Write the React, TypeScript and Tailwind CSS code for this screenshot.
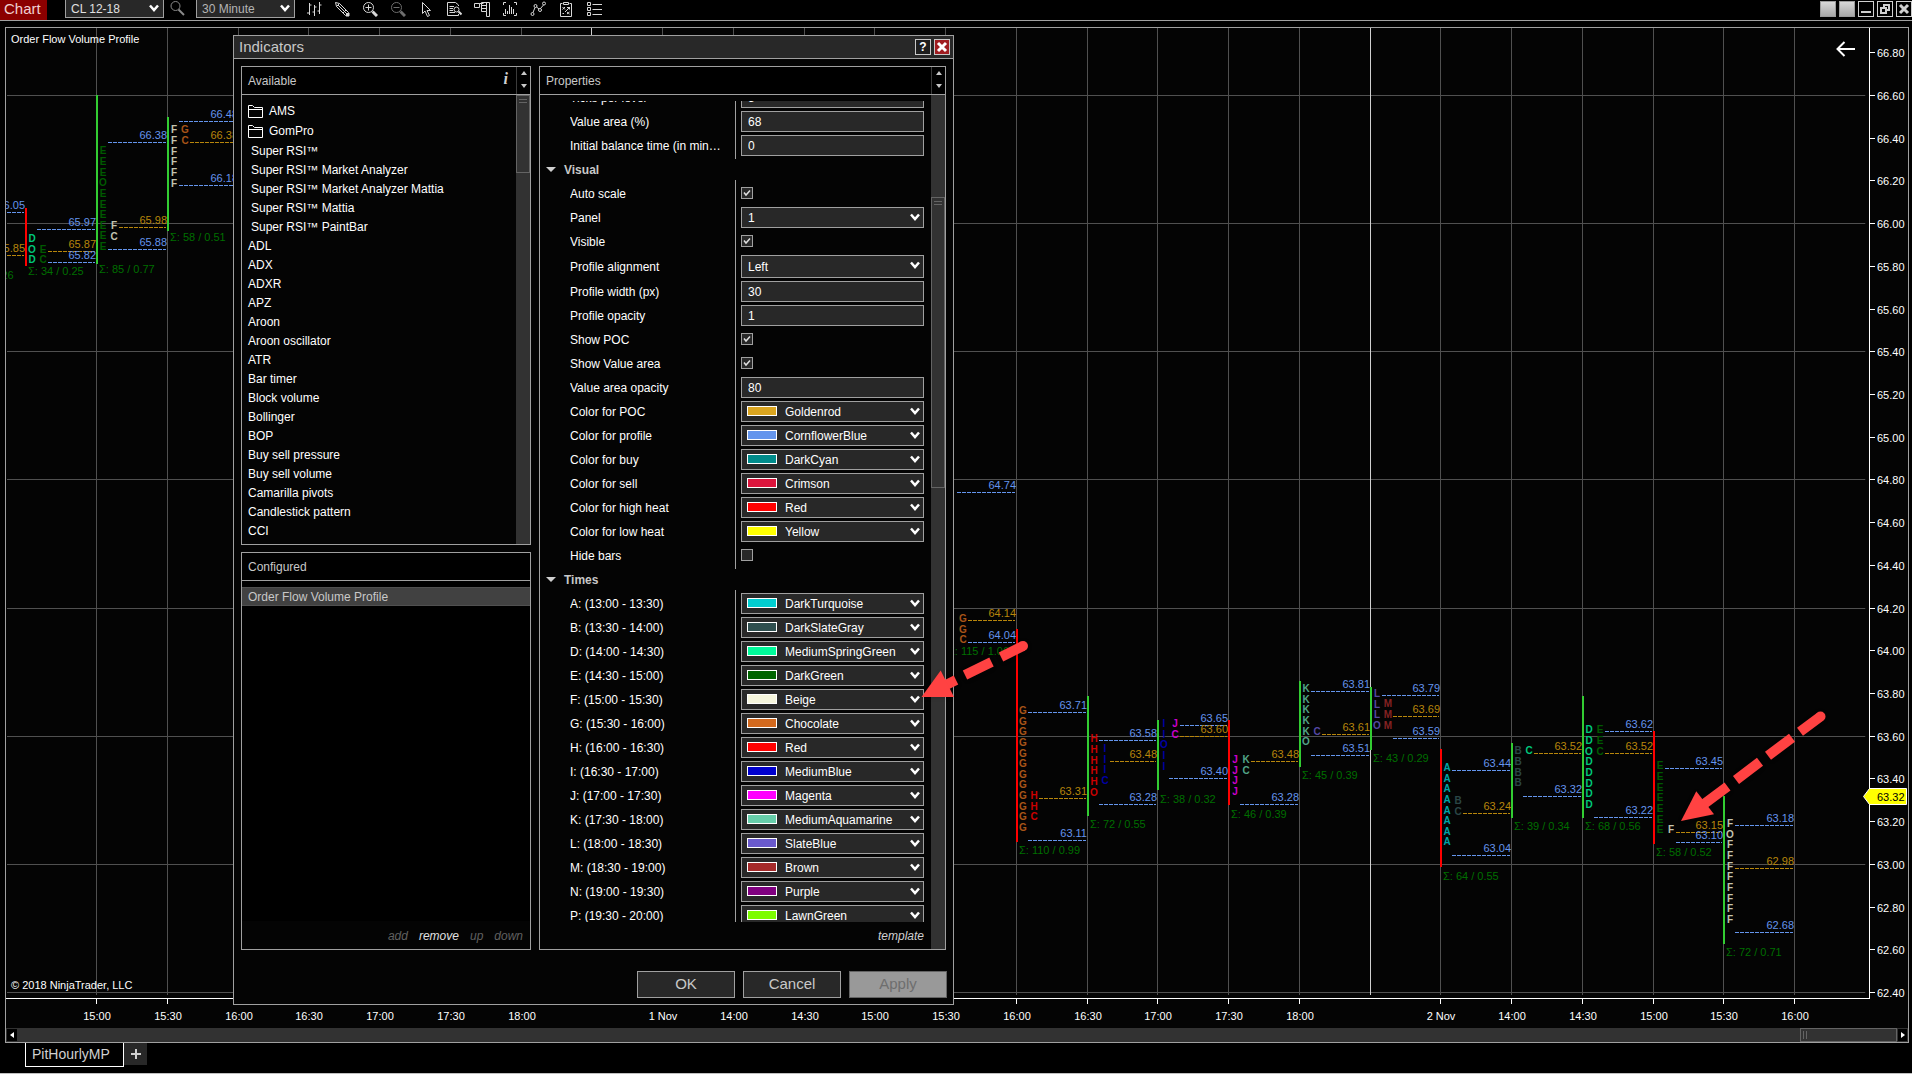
import React from 'react';

type Profile = {
  slot: number;
  bar?: { up: boolean; high: number; low: number };
  columns: { at: number; letters: string; color: string }[];
  levels: { price: number; color: string; inset: number }[];
  total?: { at: number; text: string };
};

const BLUE = '#6495ed';
const GOLD = '#b8860b';
const TURQUOISE = '#00a5a7';
const SLATE = '#2a4646';
const SPRING = '#00c87b';
const GREEN = '#005a00';
const BEIGE = '#c4c4b0';
const CHOCOLATE = '#a85418';
const RED = '#cc0000';
const INDIGO = '#0000a4';
const MAGENTA = '#cc00cc';
const AQUA = '#52a488';
const VIOLET = '#5548a4';
const BROWN = '#842222';

const profiles: Profile[] = [
  {
    slot: -2,
    columns: [],
    levels: [
      { price: 66.05, color: BLUE, inset: 11 },
      { price: 65.85, color: GOLD, inset: 11 },
    ],
    total: { at: 65.76, text: '38 / 0.26' },
  },
  {
    slot: -1,
    bar: { up: false, high: 66.07, low: 65.8 },
    columns: [
      { at: 65.935, letters: 'DOD', color: SPRING },
      { at: 65.885, letters: 'EC', color: GREEN },
    ],
    levels: [
      { price: 65.97, color: BLUE, inset: 11 },
      { price: 65.87, color: GOLD, inset: 22 },
      { price: 65.82, color: BLUE, inset: 22 },
    ],
    total: { at: 65.78, text: '34 / 0.25' },
  },
  {
    slot: 0,
    bar: { up: true, high: 66.6, low: 65.81 },
    columns: [
      { at: 66.345, letters: 'EEEOEEEEEE', color: GREEN },
      { at: 65.995, letters: 'FC', color: BEIGE },
    ],
    levels: [
      { price: 66.38, color: BLUE, inset: 11 },
      { price: 65.98, color: GOLD, inset: 22 },
      { price: 65.88, color: BLUE, inset: 11 },
    ],
    total: { at: 65.79, text: '85 / 0.77' },
  },
  {
    slot: 1,
    bar: { up: true, high: 66.495, low: 65.965 },
    columns: [
      { at: 66.443, letters: 'FFFFFF', color: BEIGE },
      { at: 66.443, letters: 'GC', color: CHOCOLATE },
    ],
    levels: [
      { price: 66.48, color: BLUE, inset: 11 },
      { price: 66.38, color: GOLD, inset: 22 },
      { price: 66.18, color: BLUE, inset: 11 },
    ],
    total: { at: 65.94, text: '58 / 0.51' },
  },
  {
    slot: 12,
    columns: [
      { at: 64.155, letters: '', color: CHOCOLATE },
      { at: 64.155, letters: 'GGC', color: CHOCOLATE },
    ],
    levels: [
      { price: 64.74, color: BLUE, inset: 11 },
      { price: 64.14, color: GOLD, inset: 22 },
      { price: 64.04, color: BLUE, inset: 22 },
    ],
    total: { at: 64.0, text: '115 / 1.06' },
  },
  {
    slot: 13,
    bar: { up: false, high: 64.1, low: 63.1 },
    columns: [
      { at: 63.725, letters: 'GGGGGGGGGGGG', color: CHOCOLATE },
      { at: 63.327, letters: 'HHC', color: RED },
    ],
    levels: [
      { price: 63.71, color: BLUE, inset: 11 },
      { price: 63.31, color: GOLD, inset: 22 },
      { price: 63.11, color: BLUE, inset: 11 },
    ],
    total: { at: 63.07, text: '110 / 0.99' },
  },
  {
    slot: 14,
    bar: { up: true, high: 63.784, low: 63.222 },
    columns: [
      { at: 63.592, letters: 'HHHHHO', color: RED },
      { at: 63.547, letters: 'IIIC', color: INDIGO },
    ],
    levels: [
      { price: 63.58, color: BLUE, inset: 11 },
      { price: 63.48, color: GOLD, inset: 22 },
      { price: 63.28, color: BLUE, inset: 11 },
    ],
    total: { at: 63.19, text: '72 / 0.55' },
  },
  {
    slot: 15,
    bar: { up: true, high: 63.672, low: 63.344 },
    columns: [
      { at: 63.664, letters: 'IIOII', color: INDIGO },
      { at: 63.664, letters: 'JC', color: MAGENTA },
    ],
    levels: [
      { price: 63.65, color: BLUE, inset: 22 },
      { price: 63.6, color: GOLD, inset: 22 },
      { price: 63.4, color: BLUE, inset: 11 },
    ],
    total: { at: 63.31, text: '38 / 0.32' },
  },
  {
    slot: 16,
    bar: { up: false, high: 63.672, low: 63.275 },
    columns: [
      { at: 63.495, letters: 'JJJJ', color: MAGENTA },
      { at: 63.495, letters: 'KC', color: AQUA },
    ],
    levels: [
      { price: 63.48, color: GOLD, inset: 22 },
      { price: 63.28, color: BLUE, inset: 11 },
    ],
    total: { at: 63.24, text: '46 / 0.39' },
  },
  {
    slot: 17,
    bar: { up: true, high: 63.854, low: 63.453 },
    columns: [
      { at: 63.828, letters: 'KKKKKO', color: AQUA },
      { at: 63.626, letters: 'C', color: VIOLET },
    ],
    levels: [
      { price: 63.81, color: BLUE, inset: 11 },
      { price: 63.61, color: GOLD, inset: 22 },
      { price: 63.51, color: BLUE, inset: 11 },
    ],
    total: { at: 63.42, text: '45 / 0.39' },
  },
  {
    slot: 18,
    bar: { up: true, high: 63.83, low: 63.532 },
    columns: [
      { at: 63.804, letters: 'LLLO', color: VIOLET },
      { at: 63.756, letters: 'MMM', color: BROWN },
    ],
    levels: [
      { price: 63.79, color: BLUE, inset: 11 },
      { price: 63.69, color: GOLD, inset: 22 },
      { price: 63.59, color: BLUE, inset: 22 },
    ],
    total: { at: 63.5, text: '43 / 0.29' },
  },
  {
    slot: 19,
    bar: { up: false, high: 63.54, low: 62.983 },
    columns: [
      { at: 63.458, letters: 'AAAAAAAA', color: TURQUOISE },
      { at: 63.303, letters: 'BC', color: SLATE },
    ],
    levels: [
      { price: 63.44, color: BLUE, inset: 11 },
      { price: 63.24, color: GOLD, inset: 22 },
      { price: 63.04, color: BLUE, inset: 11 },
    ],
    total: { at: 62.95, text: '64 / 0.55' },
  },
  {
    slot: 20,
    bar: { up: true, high: 63.564, low: 63.214 },
    columns: [
      { at: 63.536, letters: 'BBBB', color: SLATE },
      { at: 63.536, letters: 'C', color: SPRING },
    ],
    levels: [
      { price: 63.52, color: GOLD, inset: 22 },
      { price: 63.32, color: BLUE, inset: 11 },
    ],
    total: { at: 63.18, text: '39 / 0.34' },
  },
  {
    slot: 21,
    bar: { up: true, high: 63.784, low: 63.213 },
    columns: [
      { at: 63.634, letters: 'DDODDDDD', color: SPRING },
      { at: 63.634, letters: 'EEC', color: GREEN },
    ],
    levels: [
      { price: 63.62, color: BLUE, inset: 22 },
      { price: 63.52, color: GOLD, inset: 22 },
      { price: 63.22, color: BLUE, inset: 11 },
    ],
    total: { at: 63.18, text: '68 / 0.56' },
  },
  {
    slot: 22,
    bar: { up: false, high: 63.62, low: 63.093 },
    columns: [
      { at: 63.466, letters: 'EEEEEEE', color: GREEN },
      { at: 63.167, letters: 'F', color: BEIGE },
    ],
    levels: [
      { price: 63.45, color: BLUE, inset: 11 },
      { price: 63.15, color: GOLD, inset: 22 },
      { price: 63.1, color: BLUE, inset: 22 },
    ],
    total: { at: 63.06, text: '58 / 0.52' },
  },
  {
    slot: 23,
    bar: { up: true, high: 63.32, low: 62.623 },
    columns: [{ at: 63.195, letters: 'FOFFFFFFFF', color: BEIGE }],
    levels: [
      { price: 63.18, color: BLUE, inset: 11 },
      { price: 62.98, color: GOLD, inset: 11 },
      { price: 62.68, color: BLUE, inset: 11 },
    ],
    total: { at: 62.59, text: '72 / 0.71' },
  },
];

const timeLabels = [
  '15:00', '15:30', '16:00', '16:30', '17:00', '17:30', '18:00', '', '1 Nov',
  '14:00', '14:30', '15:00', '15:30', '16:00', '16:30', '17:00', '17:30', '18:00', '', '2 Nov',
  '14:00', '14:30', '15:00', '15:30', '16:00',
];

const priceLabels = Array.from({ length: 23 }, (_, i) => (66.8 - i * 0.2).toFixed(2));
const gridPrices = [66.6, 66, 65.4, 64.8, 64.2, 63.6, 63, 62.4];

const slotX = (slot: number) => Math.round(90 + slot * 70.75);
const priceY = (price: number) => Math.floor(67.4 + (66.6 - price) * 213.6);

const PriceChart = () => (
  <svg className="h-full min-w-0 flex-1 font-['Liberation_Sans',sans-serif] text-[11px]">
    {gridPrices.map((price) => (
      <line key={price} x1="1" x2="99.8%" y1={priceY(price) + 0.5} y2={priceY(price) + 0.5} stroke="#505050" />
    ))}
    {timeLabels.map((label, i) => (
      <g key={i}>
        <line x1={slotX(i) + 0.5} x2={slotX(i) + 0.5} y1="0" y2="967" stroke={label ? '#505050' : '#d0d0d0'} />
        {label && <line x1={slotX(i) + 0.5} x2={slotX(i) + 0.5} y1="971" y2="976" stroke="#fff" />}
        <text x={slotX(i) + 1} y="992" textAnchor="middle" fill="#fff">{label}</text>
      </g>
    ))}
    {profiles.map(({ slot, bar, columns, levels, total }) => {
      const x = slotX(slot);
      return (
        <g key={slot}>
          {levels.map(({ price, color, inset }) => (
            <g key={price}>
              <line
                x1={x + inset + 1}
                x2={slotX(slot + 1) - 1}
                y1={priceY(price) + 0.5}
                y2={priceY(price) + 0.5}
                stroke={color}
                strokeDasharray="4 1"
              />
              <text x={slotX(slot + 1)} y={priceY(price) - 3} textAnchor="end" fill={color}>
                {price.toFixed(2)}
              </text>
            </g>
          ))}
          {bar && (
            <rect
              x={x}
              y={priceY(bar.high)}
              width="2"
              height={priceY(bar.low) - priceY(bar.high)}
              fill={bar.up ? '#32cd32' : '#f00'}
            />
          )}
          {columns.map(({ at, letters, color }, c) =>
            letters.split('').map((letter, i) => (
              <text
                key={`${c}-${i}`}
                x={x + 7 + c * 11}
                y={priceY(at - i * 0.0498) + 5}
                textAnchor="middle"
                className="text-[10px] font-bold"
                fill={color}
              >
                {letter}
              </text>
            ))
          )}
          {total && (
            <text x={x + 3} y={priceY(total.at) + 5} fill="#006e00">
              Σ: {total.text}
            </text>
          )}
        </g>
      );
    })}
    <text x="5" y="15" fill="#fff">Order Flow Volume Profile</text>
    <text x="5" y="961" fill="#fff">© 2018 NinjaTrader, LLC</text>
    <line x1="0" x2="100%" y1="970.5" y2="970.5" stroke="#fff" />
    <svg x="100%" className="overflow-visible">
      <path d="M-14 21H-31M-24.500 14L-31.500 21L-24.500 28" fill="none" stroke="#fff" strokeWidth="2" />
    </svg>
  </svg>
);

const PriceAxis = () => (
  <svg className="h-full w-[39px] shrink-0 overflow-visible font-['Liberation_Sans',sans-serif] text-[11px]">
    <line x1="0.5" x2="0.5" y1="0" y2="971" stroke="#fff" />
    {priceLabels.map((label) => (
      <g key={label}>
        <line x1="1" x2="6" y1={priceY(Number(label)) + 0.5} y2={priceY(Number(label)) + 0.5} stroke="#fff" />
        <text x="8" y={priceY(Number(label)) + 5} fill="#fff">{label}</text>
      </g>
    ))}
    <path d="M-5.500 768.500L0.500 760.500H37.500V776.500H0.500Z" fill="#ff0" stroke="#fff" />
    <text x="8" y="773" fill="#000">63.32</text>
  </svg>
);

const toolIcons: { name: string; draw: React.ReactNode }[] = [
  {
    name: 'Bar style',
    draw: <path d="M3.500 2V14M1 12H3.500M3.500 4H5.500M8.500 4V15M6.500 11H8.500M8.500 6H10.500M13.500 1V13M11.500 10H13.500M13.500 4H15.500" />,
  },
  {
    name: 'Drawing tools',
    draw: (
      <>
        <path d="M1.500 1.500L5.500 2.500L14.500 11.500L11.500 14.500L2.500 5.500ZM2.500 5.500L5.500 2.500M4 4L13 13M12 9L9 12" />
        <path d="M12 15L15 12V15Z" fill="currentColor" />
      </>
    ),
  },
  {
    name: 'Zoom in',
    draw: (
      <>
        <circle cx="6.500" cy="6.500" r="5" />
        <path d="M3.500 6.500H9.500M6.500 3.500V9.500" />
        <path d="M10.500 10.500L15 15" strokeWidth="3" />
      </>
    ),
  },
  {
    name: 'Zoom out',
    draw: (
      <g className="text-[#6e6e6e]" stroke="currentColor">
        <circle cx="6.500" cy="6.500" r="5" />
        <path d="M3.500 6.500H9.500" />
        <path d="M10.500 10.500L15 15" strokeWidth="3" />
      </g>
    ),
  },
  {
    name: 'Cursor',
    draw: <path d="M4.500 1.500V12.500L7 10L9.500 15.500L11.500 14.500L9 9.500H12.500Z" />,
  },
  {
    name: 'Data box',
    draw: (
      <>
        <path d="M12.500 5V4L9.500 1.500H1.500V14.500H12.500V13M3.500 5.500H8M3.500 7.500H7M3.500 9.500H7M3.500 11.500H9" />
        <circle cx="10.500" cy="8.500" r="2.500" />
        <path d="M12.500 10.500L15.500 13.500" strokeWidth="2" />
      </>
    ),
  },
  {
    name: 'Chart trader',
    draw: <path d="M0.500 2.500H5.500V6.500H0.500ZM5.500 2.500H9.500M7.500 1.500H15.500V15.500H12.500V10.500H7.500ZM12.500 1.500V10.500M7.500 4.500H12.500M7.500 7.500H12.500" />,
  },
  {
    name: 'Indicators',
    draw: <path d="M4 1.500H1.500V4M12 1.500H14.500V4M1.500 12V14.500H4M14.500 12V14.500H12M3.500 8V13M5.500 10V13M7.500 4V13M9.500 6V13M11.500 8V13" />,
  },
  {
    name: 'Strategies',
    draw: (
      <>
        <circle cx="2.500" cy="13" r="1.500" />
        <circle cx="5.500" cy="5" r="1.500" />
        <circle cx="10" cy="9" r="1.500" />
        <circle cx="14" cy="2.500" r="1.500" />
        <path d="M3 11.500L5 6.500M6.500 6L9 8M10.500 7.500L13.500 4" />
      </>
    ),
  },
  {
    name: 'Strategy analyzer',
    draw: <path d="M4.500 2.500H2.500V15.500H13.500V2.500H11.500M5.500 1.500H10.500V3.500H5.500ZM4.500 6L7 8.500M7 6L4.500 8.500M11.500 6V8.500M9 6.500H11.500L7 11M9 11L11.500 13M11.500 11L9 13M4.500 12.500H6" />,
  },
  {
    name: 'Properties',
    draw: <path d="M1.500 1.500H4.500V4.500H1.500ZM1.500 6.500H4.500V9.500H1.500ZM1.500 11.500H4.500V14.500H1.500ZM6.500 3.500H16M6.500 8.500H16M6.500 13.500H16" />,
  },
];

const Chevron = ({ className }: { className: string }) => (
  <svg viewBox="0 0 10 8" className={`pointer-events-none absolute h-2 w-2.5 ${className}`}>
    <path d="M1 1.500L5 6L9 1.500" fill="none" stroke="#fff" strokeWidth="2.500" />
  </svg>
);

const ToolbarSelect = ({ label, value, className }: { label: string; value: string; className: string }) => (
  <div className={`relative h-[18px] w-[99px] ${className}`}>
    <select
      aria-label={label}
      className="block h-full w-full appearance-none border border-t-0 border-[#a0a0a0] bg-[#282828] px-[5px] text-xs leading-4"
    >
      <option>{value}</option>
    </select>
    <Chevron className="top-1 right-[5px]" />
  </div>
);

const WindowButton = ({ label, children }: { label: string; children?: React.ReactNode }) => (
  <button aria-label={label} className="flex size-4 items-center justify-center border border-[#d0d0d0] text-[#d0d0d0]">
    {children}
  </button>
);

const Toolbar = () => (
  <header className="flex h-[21px] shrink-0 items-start border-b border-[#a0a0a0]">
    <h1 className="h-5 w-[47px] bg-[#8b0000] pl-1 text-[15px] leading-[18px] text-[#f0d0d0]">Chart</h1>
    <ToolbarSelect label="Instrument" value="CL 12-18" className="ml-[18px] text-[#e0e0e0]" />
    <button aria-label="Search" className="ml-1.5 h-[17px] w-4">
      <svg viewBox="0 0 16 17" className="h-full w-full" fill="none" stroke="#8a8a8a">
        <circle cx="5.500" cy="6" r="4.500" />
        <path d="M8.500 9.500L14 15" strokeWidth="2" />
      </svg>
    </button>
    <ToolbarSelect label="Interval" value="30 Minute" className="ml-2.5 text-[#b4b4b4]" />
    <nav className="ml-[11px] flex gap-3">
      {toolIcons.map(({ name, draw }) => (
        <button key={name} aria-label={name} className="h-[17px] w-4 text-[#d8d8d8]">
          <svg viewBox="0 0 16 16" className="size-4" fill="none" stroke="currentColor">{draw}</svg>
        </button>
      ))}
    </nav>
    <div className="mt-px ml-auto flex gap-[3px]">
      <button aria-label="Link instrument" className="size-4 border border-[#9c9c9c] bg-linear-to-b from-[#d8d8d8] to-[#a8a8a8]" />
      <button aria-label="Link interval" className="size-4 border border-[#9c9c9c] bg-linear-to-b from-[#d8d8d8] to-[#a8a8a8]" />
      <WindowButton label="Minimize">
        <span className="mt-1.5 h-0.5 w-2.5 bg-[#d0d0d0]" />
      </WindowButton>
      <WindowButton label="Restore">
        <svg viewBox="0 0 12 12" className="size-3" fill="none" stroke="currentColor" strokeWidth="2">
          <path d="M2 5H7V10H2ZM5 5V2H10V7H7" />
        </svg>
      </WindowButton>
      <WindowButton label="Close">
        <svg viewBox="0 0 12 12" className="size-3" stroke="currentColor" strokeWidth="3">
          <path d="M2 2L10 10M10 2L2 10" />
        </svg>
      </WindowButton>
    </div>
  </header>
);

const customIndicators = [
  'Super RSI™', 'Super RSI™ Market Analyzer', 'Super RSI™ Market Analyzer Mattia',
  'Super RSI™ Mattia', 'Super RSI™ PaintBar',
];

const indicators = [
  'ADL', 'ADX', 'ADXR', 'APZ', 'Aroon', 'Aroon oscillator', 'ATR', 'Bar timer', 'Block volume',
  'Bollinger', 'BOP', 'Buy sell pressure', 'Buy sell volume', 'Camarilla pivots',
  'Candlestick pattern', 'CCI',
];

const ScrollButtons = () => (
  <div className="flex h-full w-3.5 flex-col items-center justify-between border-l border-[#3c3c3c] py-1">
    <button aria-label="Scroll up" className="h-1 w-1.5">
      <svg viewBox="0 0 6 4" className="h-1 w-1.5"><path d="M0 4L3 0L6 4Z" fill="#c8c8c8" /></svg>
    </button>
    <button aria-label="Scroll down" className="mb-0.5 h-1 w-1.5">
      <svg viewBox="0 0 6 4" className="h-1 w-1.5"><path d="M0 0L3 4L6 0Z" fill="#c8c8c8" /></svg>
    </button>
  </div>
);

const ScrollThumb = ({ className }: { className: string }) => (
  <div className={`border border-[#646464] px-0.5 pt-[3px] ${className}`}>
    <div className="h-1 border-y border-[#646464]" />
  </div>
);

const AvailablePanel = () => (
  <section className="flex h-[479px] flex-col border border-[#a0a0a0]">
    <div className="flex h-7 items-center border-b border-[#a0a0a0] bg-black pl-1.5">
      <h3 className="flex-1 text-xs text-[#c8c8c8]">Available</h3>
      <button aria-label="Description" className="mr-2 pb-1 font-['Liberation_Serif',serif] text-base leading-4 font-bold text-[#d0d0d0] italic">
        i
      </button>
      <ScrollButtons />
    </div>
    <div className="flex min-h-0 flex-1">
      <ul className="flex-1 overflow-hidden pt-1.5 pl-1.5 text-xs text-white">
        {['AMS', 'GomPro'].map((name) => (
          <li key={name} className="flex h-5 items-center gap-1.5">
            <svg viewBox="0 0 15 13" className="h-[13px] w-[15px]" fill="none" stroke="#fff">
              <path d="M0.500 12.500V0.500H4.500L6.500 2.500H14.500V12.500ZM0.500 4.500H14.500" />
            </svg>
            {name}
          </li>
        ))}
        {customIndicators.map((name) => (
          <li key={name} className="h-[19px] pl-[3px] leading-[21px]">{name}</li>
        ))}
        {indicators.map((name) => (
          <li key={name} className="h-[19px] leading-[21px]">{name}</li>
        ))}
      </ul>
      <div className="w-3.5 bg-[#323232]">
        <ScrollThumb className="h-[78px]" />
      </div>
    </div>
  </section>
);

const ConfiguredPanel = () => (
  <section className="flex min-h-0 flex-1 flex-col border border-[#a0a0a0]">
    <h3 className="h-7 shrink-0 border-b border-[#a0a0a0] bg-black pl-1.5 text-xs leading-7 text-[#c8c8c8]">Configured</h3>
    <ul className="flex-1 bg-black pt-1.5 text-xs text-[#c8c8c8]">
      <li className="h-[19px] border-y border-[#505050] bg-[#414141] pl-1.5 leading-[19px]">Order Flow Volume Profile</li>
    </ul>
    <div className="flex h-7 items-center justify-end gap-[11px] pt-0.5 pr-[7px] text-xs text-[#606060] italic">
      <button disabled>add</button>
      <button className="text-[#e0e0e0]">remove</button>
      <button disabled>up</button>
      <button disabled>down</button>
    </div>
  </section>
);

type Property = { label: string; value?: string; options?: boolean; swatch?: string; checked?: boolean; tall?: boolean };

const dataProperties: Property[] = [
  { label: 'Ticks per level', value: '5' },
  { label: 'Value area (%)', value: '68' },
  { label: 'Initial balance time (in minutes)', value: '0' },
];

const visualProperties: Property[] = [
  { label: 'Auto scale', checked: true },
  { label: 'Panel', value: '1', options: true },
  { label: 'Visible', checked: true },
  { label: 'Profile alignment', value: 'Left', options: true, tall: true },
  { label: 'Profile width (px)', value: '30' },
  { label: 'Profile opacity', value: '1' },
  { label: 'Show POC', checked: true },
  { label: 'Show Value area', checked: true },
  { label: 'Value area opacity', value: '80' },
  { label: 'Color for POC', value: 'Goldenrod', swatch: 'bg-[#daa520]' },
  { label: 'Color for profile', value: 'CornflowerBlue', swatch: 'bg-[#6495ed]' },
  { label: 'Color for buy', value: 'DarkCyan', swatch: 'bg-[#008b8b]' },
  { label: 'Color for sell', value: 'Crimson', swatch: 'bg-[#dc143c]' },
  { label: 'Color for high heat', value: 'Red', swatch: 'bg-[#ff0000]' },
  { label: 'Color for low heat', value: 'Yellow', swatch: 'bg-[#ffff00]' },
  { label: 'Hide bars', checked: false },
];

const timeProperties: Property[] = [
  { label: 'A: (13:00 - 13:30)', value: 'DarkTurquoise', swatch: 'bg-[#00ced1]' },
  { label: 'B: (13:30 - 14:00)', value: 'DarkSlateGray', swatch: 'bg-[#2f4f4f]' },
  { label: 'D: (14:00 - 14:30)', value: 'MediumSpringGreen', swatch: 'bg-[#00fa9a]' },
  { label: 'E: (14:30 - 15:00)', value: 'DarkGreen', swatch: 'bg-[#006400]' },
  { label: 'F: (15:00 - 15:30)', value: 'Beige', swatch: 'bg-[#f5f5dc]' },
  { label: 'G: (15:30 - 16:00)', value: 'Chocolate', swatch: 'bg-[#d2691e]' },
  { label: 'H: (16:00 - 16:30)', value: 'Red', swatch: 'bg-[#ff0000]' },
  { label: 'I: (16:30 - 17:00)', value: 'MediumBlue', swatch: 'bg-[#0000cd]' },
  { label: 'J: (17:00 - 17:30)', value: 'Magenta', swatch: 'bg-[#ff00ff]' },
  { label: 'K: (17:30 - 18:00)', value: 'MediumAquamarine', swatch: 'bg-[#66cdaa]' },
  { label: 'L: (18:00 - 18:30)', value: 'SlateBlue', swatch: 'bg-[#6a5acd]' },
  { label: 'M: (18:30 - 19:00)', value: 'Brown', swatch: 'bg-[#a52a2a]' },
  { label: 'N: (19:00 - 19:30)', value: 'Purple', swatch: 'bg-[#800080]' },
  { label: 'P: (19:30 - 20:00)', value: 'LawnGreen', swatch: 'bg-[#7cfc00]' },
];

const PropertyEditor = ({ id, property }: { id: string; property: Property }) => {
  const { value, options, swatch, checked } = property;

  if (checked !== undefined) {
    return (
      <div className="relative mb-px size-3">
        <input
          id={id}
          type="checkbox"
          defaultChecked={checked}
          className="peer block size-3 appearance-none border border-[#a0a0a0] bg-[#282828]"
        />
        <svg viewBox="0 0 12 12" className="pointer-events-none absolute inset-0 hidden size-3 peer-checked:block">
          <path d="M3 5.500L5 8L9 3.500" fill="none" stroke="#e0e0e0" strokeWidth="1.500" />
        </svg>
      </div>
    );
  }

  if (options || swatch) {
    return (
      <div className="relative h-full w-full">
        <select
          id={id}
          className={`block h-full w-full appearance-none border border-[#a0a0a0] bg-[#282828] text-xs text-white ${swatch ? 'pl-[43px]' : 'pl-1.5'}`}
        >
          <option>{value}</option>
        </select>
        {swatch && <span className={`pointer-events-none absolute top-[5px] left-1.5 h-2.5 w-[30px] border border-white ${swatch}`} />}
        <Chevron className="top-1.5 right-1" />
      </div>
    );
  }

  return (
    <input
      id={id}
      type="text"
      defaultValue={value}
      className="h-full w-full border border-[#a0a0a0] bg-[#282828] px-1.5 text-xs text-white"
    />
  );
};

const PropertyGroup = ({ title, properties }: { title?: string; properties: Property[] }) => (
  <div>
    {title && (
      <h4 className="flex h-[21px] items-center gap-2 pl-1.5 text-xs font-bold text-[#c8c8c8]">
        <svg viewBox="0 0 10 6" className="h-1.5 w-2.5"><path d="M0 0H10L5 5Z" fill="#d0d0d0" /></svg>
        {title}
      </h4>
    )}
    <div className="relative pb-[3px]">
      <div className="absolute inset-y-0 left-[195px] w-px bg-[#a0a0a0]" />
      {properties.map((property) => (
        <div key={property.label} className={`flex items-center pt-[3px] pl-[30px] ${property.tall ? 'h-[26px]' : 'h-6'}`}>
          <label htmlFor={property.label} className="w-[171px] shrink-0 truncate pr-4 text-xs text-white">
            {property.label}
          </label>
          <div className="flex h-full w-[183px] items-center">
            <PropertyEditor id={property.label} property={property} />
          </div>
        </div>
      ))}
    </div>
  </div>
);

const PropertiesPanel = () => (
  <section className="flex flex-1 flex-col border border-[#a0a0a0]">
    <div className="flex h-7 shrink-0 items-center border-b border-[#a0a0a0] bg-black pl-1.5">
      <h3 className="flex-1 text-xs text-[#c8c8c8]">Properties</h3>
      <ScrollButtons />
    </div>
    <div className="flex min-h-0 flex-1">
      <div className="flex flex-1 flex-col pt-1.5">
        <div className="min-h-0 flex-1 overflow-hidden">
          <div className="-mt-[17px]">
            <PropertyGroup properties={dataProperties} />
            <PropertyGroup title="Visual" properties={visualProperties} />
            <PropertyGroup title="Times" properties={timeProperties} />
          </div>
        </div>
        <div className="flex h-[27px] items-center justify-end pr-[7px] text-xs text-[#d0d0d0] italic">
          <button>template</button>
        </div>
      </div>
      <div className="w-3.5 bg-[#323232] pt-[102px]">
        <ScrollThumb className="h-[291px]" />
      </div>
    </div>
  </section>
);

const IndicatorsDialog = () => (
  <div
    role="dialog"
    aria-label="Indicators"
    className="absolute top-[35px] left-[233px] flex h-[970px] w-[721px] flex-col border border-[#a0a0a0] bg-[#040404]"
  >
    <div className="flex h-[23px] shrink-0 items-center gap-[3px] border-b border-[#a0a0a0] bg-[#282828] pr-[3px] pl-[5px]">
      <h2 className="flex-1 text-[15px] leading-5 text-[#c8c8c8]">Indicators</h2>
      <button className="size-4 border border-[#c8c8c8] bg-[#1e1e1e] text-xs leading-3 font-bold text-white">?</button>
      <button aria-label="Close dialog" className="flex size-4 items-center justify-center border border-[#c8c8c8] bg-[#a01c20]">
        <svg viewBox="0 0 12 12" className="size-3" stroke="#fff" strokeWidth="3">
          <path d="M2 2L10 10M10 2L2 10" />
        </svg>
      </button>
    </div>
    <div className="flex min-h-0 flex-1 gap-2 px-[7px] pt-[7px]">
      <div className="flex w-[290px] flex-col gap-[7px]">
        <AvailablePanel />
        <ConfiguredPanel />
      </div>
      <PropertiesPanel />
    </div>
    <div className="flex h-[54px] shrink-0 items-end justify-end gap-2 pr-1.5 pb-1.5 text-[15px] text-[#c8c8c8]">
      <button className="h-[27px] w-[98px] border border-[#a0a0a0] bg-[#282828]">OK</button>
      <button className="h-[27px] w-[98px] border border-[#a0a0a0] bg-[#282828]">Cancel</button>
      <button disabled className="h-[27px] w-[98px] border border-[#646464] bg-[#999999] text-[#6e6e6e]">Apply</button>
    </div>
  </div>
);

const Annotations = () => (
  <svg className="pointer-events-none absolute inset-0 h-full w-full drop-shadow-sm" fill="#ff4242" stroke="#ff4242" strokeWidth="10">
    <g>
      <circle cx="1023" cy="646" r="5" stroke="none" />
      <path d="M1023 646L1001 657M991.500 662L965 675M956 680L944 686" />
      <path d="M921.500 697L940.700 670.500L954 697Z" stroke="none" />
    </g>
    <g>
      <circle cx="1820.500" cy="716.500" r="5" stroke="none" />
      <path d="M1820.500 716.500L1800 731.700M1792 737.700L1768 755.700M1760 761.700L1736 780M1727.500 786.500L1704 804" />
      <path d="M1681 821L1696.300 791.300L1714 814.300Z" stroke="none" />
    </g>
  </svg>
);

const App = () => {
  return (
    <div className="relative flex h-screen flex-col overflow-hidden border-b border-[#c0c0c0] bg-black font-['Liberation_Sans',sans-serif]">
      <Toolbar />
      <main className="mt-1.5 mr-[3px] ml-[5px] flex min-h-0 flex-1 flex-col border border-[#a0a0a0] bg-[#040404]">
        <div className="flex min-h-0 flex-1">
          <PriceChart />
          <PriceAxis />
        </div>
        <div className="flex h-3.5 shrink-0 justify-between bg-[#323232]">
          <button aria-label="Scroll left" className="my-px ml-px flex w-2.5 items-center justify-center bg-black">
            <svg viewBox="0 0 4 6" className="h-1.5 w-1"><path d="M4 0L0 3L4 6Z" fill="#fff" /></svg>
          </button>
          <div className="flex">
            <div className="flex w-[97px] items-center border border-[#646464] pl-0.5">
              <div className="h-2 w-1 border-x border-[#646464]" />
            </div>
            <button aria-label="Scroll right" className="mx-px my-px flex w-[9px] items-center justify-center bg-black">
              <svg viewBox="0 0 4 6" className="h-1.5 w-1"><path d="M0 0L4 3L0 6Z" fill="#fff" /></svg>
            </button>
          </div>
        </div>
      </main>
      <footer className="flex h-[30px] shrink-0 items-start pl-[25px]">
        <button className="h-6 w-[99px] border border-t-0 border-white pb-0.5 pl-1.5 text-left text-sm leading-5 text-[#d0d0d0]">
          PitHourlyMP
        </button>
        <button aria-label="Add tab" className="flex h-[22px] w-[23px] items-center justify-center bg-[#282828]">
          <svg viewBox="0 0 10 10" className="size-2.5" stroke="#d0d0d0" strokeWidth="2"><path d="M0 5H10M5 0V10" /></svg>
        </button>
      </footer>
      <IndicatorsDialog />
      <Annotations />
    </div>
  );
};

export default App;
